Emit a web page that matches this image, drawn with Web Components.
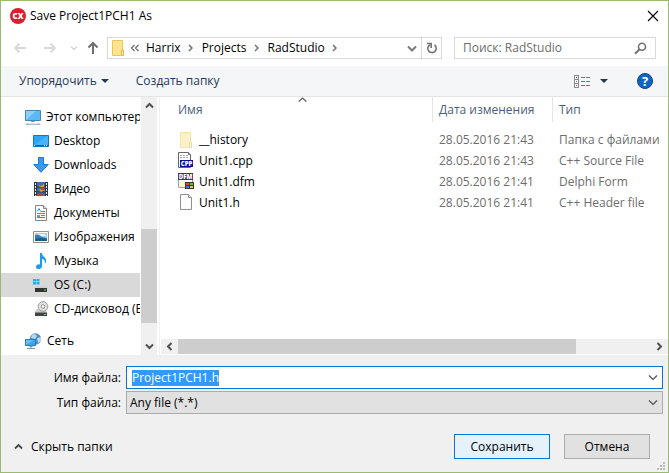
<!DOCTYPE html>
<html lang="ru">
<head>
<meta charset="utf-8">
<title>Save Project1PCH1 As</title>
<style>
html, body { height: 100%; margin: 0; }
body { font: 12px/16px "Open Sans", "Noto Sans", sans-serif; color: #000; background: #fff; }
</style>
</head>
<body>
<save-dialog></save-dialog>
<script>
const ICONS = {
  app: [16, 16, `<circle cx="8" cy="8" r="8" fill="#dc1f2e"/><text x="8" y="11" text-anchor="middle" font-family="Open Sans, sans-serif" font-size="8" font-weight="800" fill="#fff">CX</text>`],
  close: [12, 12, `<path d="M1 1l10 10M11 1L1 11" stroke="#000" stroke-width="1.1" fill="none"/>`],
  back: [14, 12, `<path d="M12 6H1.500M5.500 1.500L1 6l4.500 4.500" stroke="#d9d9d9" stroke-width="1.800" fill="none"/>`],
  forward: [14, 12, `<path d="M0 6h11M6.500 1.500L11 6l-4.500 4.500" stroke="#d9d9d9" stroke-width="1.800" fill="none"/>`],
  recent: [8, 6, `<path d="M1 1.500l3 3 3-3" stroke="#d4d4d4" stroke-width="1.400" fill="none"/>`],
  up: [12, 14, `<path d="M6 13V2M1.500 6.500L6 2l4.500 4.500" stroke="#6e6e6e" stroke-width="2" fill="none"/>`],
  folder: [16, 18, `<path d="M2.500 1.500h10v9.500h1v5.500h-11z" fill="#ffe391" stroke="#ecc656"/><path d="M11.500 16.500v-5h2v5z" fill="#ffe9a8" stroke="#e8bd45"/>`],
  fadedfolder: [16, 18, `<path d="M2.500 1.500h10v9.500h1v5.500h-11z" fill="#fdf1c9" stroke="#f5e3ab"/><path d="M11.500 16.500v-5h2v5z" fill="#fef4d3" stroke="#f2dea2"/>`],
  dblleft: [10, 8, `<path d="M4.500 1L1.500 4l3 3M8.500 1l-3 3 3 3" stroke="#6a6a6a" stroke-width="1.200" fill="none"/>`],
  crumb: [6, 8, `<path d="M1 1l3 3-3 3" stroke="#757575" stroke-width="1.500" fill="none"/>`],
  chevdown: [10, 7, `<path d="M1 1.500l4 4 4-4" stroke="#7a7a7a" stroke-width="2" fill="none"/>`],
  combo: [10, 7, `<path d="M1 1.500l4 4 4-4" stroke="#505050" stroke-width="1.200" fill="none"/>`],
  refresh: [12, 12, `<path d="M8.500 3A4.200 4.200 0 1 1 4 2.700" stroke="#737373" stroke-width="1.600" fill="none"/><path d="M1 1.500h4.200v4.500" stroke="#737373" stroke-width="1.600" fill="none"/>`],
  search: [13, 13, `<circle cx="8" cy="4.700" r="3.500" stroke="#737373" stroke-width="1.600" fill="none"/><path d="M5.500 7.300L1 11.800" stroke="#737373" stroke-width="2"/>`],
  caret: [8, 4, `<path d="M0 0h8L4 4z" fill="#1e395b"/>`],
  view: [17, 13, `<g shape-rendering="crispEdges"><path d="M.5.5h4v12h-4zM0 4.500h5M0 8.500h5" stroke="#8a8a8a" fill="#fff"/><path d="M2 2h1v1H2z" fill="#444"/><path d="M2 6h1v1H2z" fill="#2882e0"/><path d="M2 10h1v1H2z" fill="#d92020"/><path d="M7 2.500h4M12 2.500h4M7 6.500h4M12 6.500h4M7 10.500h4M12 10.500h4" stroke="#747474"/></g>`],
  help: [16, 16, `<circle cx="8" cy="8" r="7.500" fill="#0b66c5" stroke="#11457e"/><text x="8" y="12.500" text-anchor="middle" font-family="Open Sans, sans-serif" font-size="13" font-weight="700" fill="#fff">?</text>`],
  sort: [9, 5, `<path d="M.700 4.500l3.800-3.500 3.800 3.500" stroke="#606060" stroke-width="1.200" fill="none"/>`],
  scrollup: [9, 7, `<path d="M1 5.500L4.500 2 8 5.500" stroke="#505050" stroke-width="2" fill="none"/>`],
  scrolldown: [9, 7, `<path d="M1 1.500L4.500 5 8 1.500" stroke="#505050" stroke-width="2" fill="none"/>`],
  scrollleft: [7, 9, `<path d="M5.500 1L2 4.500 5.500 8" stroke="#505050" stroke-width="2" fill="none"/>`],
  scrollright: [7, 9, `<path d="M1.500 1L5 4.500 1.500 8" stroke="#505050" stroke-width="2" fill="none"/>`],
  computer: [16, 16, `<path d="M.5 1.500h15v10H.5z" fill="#8dd1fb" stroke="#3c88ba"/><path d="M1 11L11 2h4v9z" fill="#5cb9f3"/><path d="M6 12h4v1H6z" fill="#80a4ba"/><path d="M2 14h12l2 2H0z" fill="#a9bac6"/><path d="M3 14.500h10" stroke="#e4edf3"/>`],
  desktop: [16, 14, `<path d="M.5 1.500h15v11H.5z" fill="#2ba5f7" stroke="#1477b8"/><path d="M1 11L14 2h1v9z" fill="#45b4fb"/><path d="M1 11.500h14" stroke="#116398"/><path d="M1 11.500h1M11 11.500h1M13 11.500h1" stroke="#fff"/>`],
  downloads: [16, 16, `<path d="M5.500.5h5v7h4.800L8 15.300.7 7.500h4.800z" fill="#3b9ae8" stroke="#2679bd"/>`],
  video: [16, 16, `<path d="M1 1h14v14H1z" fill="#343434"/><path d="M4 1h8v14H4z" fill="#3a70b3"/><path d="M4 6h8M4 11h8" stroke="#17375c"/><path d="M5 4l3 1 3-2v3H7zM6 9l4-2 2 2-4 2z" fill="#e39b26"/><path d="M8 6h3v3H8zM5 12h5v2H5z" fill="#b64238"/><path d="M2.500 2v13M13.500 2v13" stroke="#eee" stroke-dasharray="2 1"/>`],
  documents: [16, 16, `<path d="M2.500.5h8l3 3v12h-11z" fill="#fff" stroke="#858585"/><path d="M10.500.5v3h3" fill="#ddd" stroke="#858585"/><path d="M4 6.500l2-3 1.500 3M4 8.500h8M8 6.500h4M8 10.500h4M4 12.500h8" stroke="#2f91d3" fill="none"/><path d="M4 10h3v2H4z" fill="#4ca2df"/>`],
  images: [16, 14, `<path d="M.5 1.500h15v11H.5z" fill="#fff" stroke="#929292"/><path d="M2 3h12v8H2z" fill="#9cd2f3"/><path d="M2 5q4-1 7 2l5 1v3H2z" fill="#3f7ba5"/><path d="M2 9q5-2 12 0v2H2z" fill="#245981"/><path d="M5 4h6l2 2H8z" fill="#e8f6fc"/>`],
  music: [16, 16, `<path d="M7 0h2c0 4 5 4 4 9-.300 1-.800 1.500-1 1.500C12 8 11 6 9 6v7c0 4-6 4-6 1 0-2 2-3 4-2.500z" fill="#1e9cec"/>`],
  drive: [16, 16, `<path d="M0 2h3v2.500H0zM3.500 2h3v2.500h-3zM0 5h3v2.500H0zM3.500 5h3v2.500h-3z" fill="#18b5f0"/><path d="M4 9h9l1.500 2.500H2z" fill="#d2d2d2"/><path d="M2 11h12v4H2z" fill="#343434"/><path d="M11 12.500h2v1h-2z" fill="#53ec5a"/>`],
  cd: [16, 16, `<path d="M4 8h8l2 3.500H1z" fill="#ccc"/><circle cx="10" cy="5.500" r="4.800" fill="#e3e3e3" stroke="#9c9c9c"/><circle cx="10" cy="5.500" r="1.800" fill="#fff" stroke="#8c8c8c"/><path d="M2 11h12v4H2z" fill="#444"/><path d="M2 11.500h12" stroke="#888"/><path d="M11 13h2v1h-2z" fill="#53ec5a"/>`],
  network: [17, 16, `<circle cx="10.500" cy="6" r="5.700" fill="#4f8ec6"/><path d="M7 2l3-1 2 2-2 3-4-1zM12 5l4-1v4l-3 2z" fill="#b8d8ec"/><path d="M.5 6.500h10v6H.5z" fill="#67c1f6" stroke="#247cb5"/><path d="M1 12l8-5h1v5z" fill="#3ba6eb"/><path d="M5 13h2v1H5zM2 15.500h8" fill="#5b8eb0" stroke="#6e9ab8"/>`],
  cpp: [16, 17, `<path d="M.5.5h10l2 2v13H.5z" fill="#fff" stroke="#666"/><path d="M10.500.5v2h2" fill="#ddd" stroke="#666"/><path d="M2 3.500h8M2 5.500h9" stroke="#aaa" stroke-dasharray="2 1"/><path d="M2 8h13v7H2z" fill="#090e95"/><text x="8.500" y="14" text-anchor="middle" font-family="Open Sans, sans-serif" font-size="6" font-weight="800" fill="#fff">CPP</text>`],
  dfm: [17, 17, `<path d="M.5.5h14v14H.5z" fill="#fff" stroke="#a99aa9"/><path d="M0 0h15v7H0z" fill="#57305f"/><text x="7.500" y="6" text-anchor="middle" font-family="Open Sans, sans-serif" font-size="6" font-weight="800" fill="#fff">DFM</text><path d="M2 8h5v6H2z" fill="#fff8c9"/><path d="M7 9h9v7H7z" fill="#3d3434"/><path d="M8 10h3v2H8z" fill="#f24925"/><path d="M12 10h3v2h-3z" fill="#5fc32d"/><path d="M8 13h3v2H8z" fill="#3b7bf1"/><path d="M12 13h3v2h-3z" fill="#f2c730"/>`],
  file: [16, 17, `<path d="M2.500.5h8l3 3v12h-11z" fill="#fcfcfc" stroke="#8f8f8f"/><path d="M10.500.5v3h3" fill="#e5e5e5" stroke="#8f8f8f"/>`],
  collapse: [9, 7, `<path d="M1 5.500L4.500 2 8 5.500" stroke="#444" stroke-width="1.800" fill="none"/>`],
  grip: [8, 8, `<path d="M6 0h2v2H6zM3 3h2v2H3zM6 3h2v2H6zM0 6h2v2H0zM3 6h2v2H3zM6 6h2v2H6z" fill="#bbb"/>`]
};
const icon = name => `<ui-icon name="${name}"></ui-icon>`;

function define(tag, render, ready) {
  customElements.define(tag, class extends HTMLElement {
    connectedCallback() {
      if (this.shadowRoot) return;
      const root = this.attachShadow({ mode: 'open' });
      root.innerHTML = `<style>
        :host, * { box-sizing: border-box; }
        button, input, select { font: inherit; color: inherit; margin: 0; border-radius: 0; }
        button { border: 0; padding: 0; background: none; display: flex; align-items: center; }
      </style>` + render(this);
      if (ready) ready(root);
    }
  });
}

define('ui-icon', el => {
  const [w, h, body] = ICONS[el.getAttribute('name')];
  return `<style>:host { display: block; flex: none; } svg { display: block; }</style>
    <svg width="${w}" height="${h}" viewBox="0 0 ${w} ${h}" aria-hidden="true">${body}</svg>`;
});

define('title-bar', () => `<style>
    :host { display: flex; align-items: center; gap: 4px; height: 29px; padding: 0 9px; }
    h1 { flex: 1; margin: 0; font: inherit; }
  </style>
  ${icon('app')}<h1><slot></slot></h1>
  <button aria-label="Закрыть">${icon('close')}</button>`);

define('address-bar', () => `<style>
    :host { display: grid; grid-template-columns: 93px minmax(0, 335fr) 12px minmax(0, 202fr); align-items: center; height: 36px; padding: 0 12px 0 13px; }
    .history { display: flex; align-items: center; }
    .history button:nth-child(2) { margin-left: 16px; }
    .history button:nth-child(3) { margin-left: 12px; }
    .history button:nth-child(4) { margin-left: 9px; }
    .path, .search { display: flex; align-items: center; height: 22px; border: 1px solid #d9d9d9; background: #fff; }
    .path { padding-left: 2px; }
    nav { flex: 1; display: flex; align-items: center; padding-left: 4px; white-space: nowrap; }
    nav a { color: inherit; text-decoration: none; margin: 0 7px 0 6px; }
    nav a + ui-icon { margin-right: 2px; }
    .drop { padding: 0 4px; }
    .refresh { height: 20px; width: 20px; justify-content: center; border-left: 1px solid #d9d9d9; }
    .search { grid-column: 4; padding: 0 8px; }
    input { flex: 1; min-width: 0; border: 0; padding: 0; outline: 0; background: none; }
    input::placeholder { color: #6d6d6d; opacity: 1; }
  </style>
  <div class="history">
    <button aria-label="Назад">${icon('back')}</button>
    <button aria-label="Вперед">${icon('forward')}</button>
    <button aria-label="Последние расположения">${icon('recent')}</button>
    <button aria-label="Вверх">${icon('up')}</button>
  </div>
  <div class="path">${icon('folder')}
    <nav>${icon('dblleft')}<a href="#harrix">Harrix</a>${icon('crumb')}<a href="#projects">Projects</a>${icon('crumb')}<a href="#radstudio">RadStudio</a>${icon('crumb')}</nav>
    <button class="drop" aria-label="Предыдущие расположения">${icon('chevdown')}</button>
    <button class="refresh" aria-label="Обновить">${icon('refresh')}</button>
  </div>
  <div class="search"><input type="search" aria-label="Поиск" placeholder="Поиск: RadStudio">${icon('search')}</div>`);

define('command-bar', () => `<style>
    :host { display: flex; align-items: center; height: 31px; padding: 0 15px 0 18px; background: #f5f6f7; border-bottom: 1px solid #e5e5e5; color: #1e395b; }
    button { gap: 4px; }
    .new { margin-left: 27px; }
    .view { margin-left: auto; gap: 9px; }
    .help { margin-left: 29px; }
  </style>
  <button>Упорядочить ${icon('caret')}</button>
  <button class="new">Создать папку</button>
  <button class="view" aria-label="Вид">${icon('view')}${icon('caret')}</button>
  <button class="help" aria-label="Справка">${icon('help')}</button>`);

define('scroll-track', el => {
  const v = el.hasAttribute('vertical');
  return `<style>
    :host { display: flex; flex-direction: ${v ? 'column' : 'row'}; flex: none; ${v ? 'width' : 'height'}: ${v ? 16 : 15}px; background: #f0f0f0; }
    button { flex: 0 0 17px; justify-content: center; }
    .before { flex: var(--before) 0 0; } .thumb { flex: var(--thumb) 0 0; background: #cdcdcd; } .after { flex: var(--after) 0 0; }
  </style>
  <button aria-label="${v ? 'Вверх' : 'Влево'}">${icon(v ? 'scrollup' : 'scrollleft')}</button>
  <div class="before"></div><div class="thumb"></div><div class="after"></div>
  <button aria-label="${v ? 'Вниз' : 'Вправо'}">${icon(v ? 'scrolldown' : 'scrollright')}</button>`;
});

define('tree-item', el => `<style>
    :host { display: block; }
    :host([selected]) { background: #d9d9d9; }
    :host([gap]) { margin-top: 8px; }
    button { width: 100%; height: 24px; gap: 5px; padding-left: 32px; white-space: nowrap; text-align: left; overflow: hidden; }
    :host([root]) button { padding-left: 24px; }
    .icon { flex: 0 0 16px; }
  </style>
  <button><span class="icon">${icon(el.getAttribute('icon'))}</span><slot></slot></button>`);

define('side-bar', () => `<style>
    :host { display: flex; border-right: 1px solid #f0f0f0; }
    .tree { flex: 1; min-width: 0; padding-top: 8px; margin-right: 1px; overflow: hidden; }
    scroll-track { margin-right: 2px; --before: 115; --thumb: 94; --after: 15; }
  </style>
  <div class="tree"><slot></slot></div><scroll-track vertical></scroll-track>`);

const FILES = [
  ['fadedfolder', '__history', '28.05.2016 21:43', 'Папка с файлами'],
  ['cpp', 'Unit1.cpp', '28.05.2016 21:43', 'C++ Source File'],
  ['dfm', 'Unit1.dfm', '28.05.2016 21:41', 'Delphi Form'],
  ['file', 'Unit1.h', '28.05.2016 21:41', 'C++ Header file']
];
define('file-list', () => `<style>
    :host { display: flex; flex-direction: column; min-width: 0; }
    .view { flex: 1; overflow: hidden; }
    table { width: 100%; table-layout: fixed; border-collapse: separate; border-spacing: 0; }
    th, td { padding: 0 0 0 6px; text-align: left; font-weight: 400; white-space: nowrap; }
    th { position: relative; height: 25px; border-right: 1px solid #e5e5e5; color: #4c607a; }
    th:last-child { border: 0; }
    th:first-child, td:first-child { padding-left: 18px; }
    th ui-icon { position: absolute; top: 0; left: calc(50% + 2px); }
    td { height: 21px; color: #6d6d6d; }
    tbody::before { content: ""; display: block; height: 7px; }
    .name { display: flex; align-items: center; gap: 4px; color: #000; }
    .name span { flex: 0 0 17px; }
    .c1 { width: 273px; } .c2 { width: 120px; }
    scroll-track { margin: 0 0 1px 1px; --before: 0; --thumb: 398; --after: 75; }
  </style>
  <div class="view"><table>
    <colgroup><col class="c1"><col class="c2"><col></colgroup>
    <thead><tr><th>Имя${icon('sort')}</th><th>Дата изменения</th><th>Тип</th></tr></thead>
    <tbody>${FILES.map(([i, n, d, t]) => `<tr><td><div class="name"><span>${icon(i)}</span>${n}</div></td><td>${d}</td><td>${t}</td></tr>`).join('')}</tbody>
  </table></div>
  <scroll-track></scroll-track>`);

define('file-form', () => `<style>
    :host { display: grid; grid-template-columns: 120px 1fr; column-gap: 5px; row-gap: 2px; align-items: center; padding: 11px 5px 0 0; }
    label { text-align: right; }
    .box { display: flex; align-items: center; height: 23px; border: 1px solid #0078d7; background: #fff; padding-right: 4px; }
    .type { border-color: #acacac; background: #e1e1e1; }
    input { flex: 1; min-width: 0; height: 16px; padding: 0 0 0 5px; border: 0; outline: 0; background: none; }
    input::selection { background: #3399ff; color: #fff; }
    select { appearance: none; flex: 1; min-width: 0; height: 21px; padding: 0 0 0 3px; border: 0; outline: 0; background: none; }
  </style>
  <label for="name">Имя файла:</label>
  <div class="box"><input id="name" value="Project1PCH1.h"><button aria-label="Показать имена">${icon('combo')}</button></div>
  <label for="type">Тип файла:</label>
  <div class="box type"><select id="type"><option>Any file (*.*)</option></select>${icon('combo')}</div>`,
  root => { const f = root.getElementById('name'); f.focus(); f.select(); });

define('action-bar', () => `<style>
    :host { display: flex; align-items: center; gap: 14px; padding: 20px 18px 13px 13px; position: relative; }
    .hide { margin-right: auto; gap: 8px; }
    .push { height: 25px; width: 86px; justify-content: center; border: 1px solid #adadad; background: #e1e1e1; }
    .default { width: 96px; border-color: #0078d7; background: #e5f1fb; }
    .grip { position: absolute; right: 3px; bottom: 2px; }
  </style>
  <button class="hide">${icon('collapse')}Скрыть папки</button>
  <button class="push default">Сохранить</button>
  <button class="push">Отмена</button>
  <ui-icon class="grip" name="grip"></ui-icon>`);

define('save-dialog', () => `<style>
    :host { display: flex; flex-direction: column; min-height: 100vh; border: 1px solid #9aba74; background: #fff; }
    main { flex: 1; display: grid; grid-template-columns: 159px minmax(0, 1fr); }
    footer { background: #f0f0f0; }
  </style>
  <title-bar>Save Project1PCH1 As</title-bar>
  <address-bar></address-bar>
  <command-bar></command-bar>
  <main>
    <side-bar>
      <tree-item root icon="computer">Этот компьютер</tree-item>
      <tree-item icon="desktop">Desktop</tree-item>
      <tree-item icon="downloads">Downloads</tree-item>
      <tree-item icon="video">Видео</tree-item>
      <tree-item icon="documents">Документы</tree-item>
      <tree-item icon="images">Изображения</tree-item>
      <tree-item icon="music">Музыка</tree-item>
      <tree-item icon="drive" selected>OS (C:)</tree-item>
      <tree-item icon="cd">CD-дисковод (E:)</tree-item>
      <tree-item root gap icon="network">Сеть</tree-item>
    </side-bar>
    <file-list></file-list>
  </main>
  <footer><file-form></file-form><action-bar></action-bar></footer>`);
</script>
</body>
</html>
